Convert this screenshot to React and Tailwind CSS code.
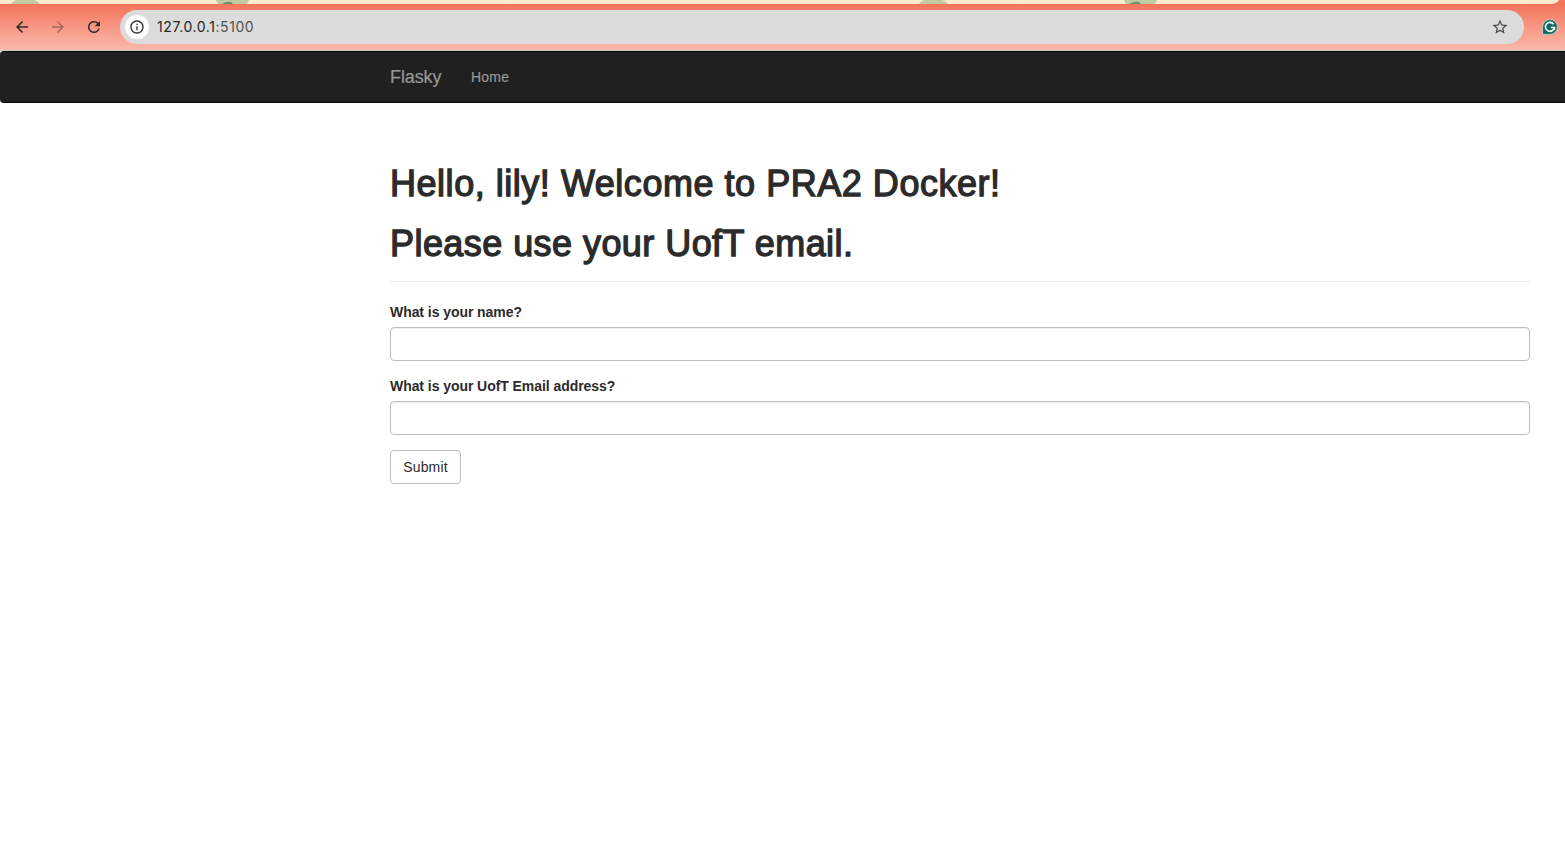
import React from "react";
import { MdArrowBack, MdArrowForward, MdRefresh, MdInfoOutline, MdStarBorder } from "react-icons/md";

function ThemeStrip() {
  return (
    <svg className="block h-1 w-full shrink-0" viewBox="0 0 1565 4">
      <rect width="1565" height="4" fill="#f3765d" />
      <path d="M0 0H1559Q1557 4 1550 4H0Z" fill="#fdebd0" />
      <g fill="#c0ca9f">
        <path d="M11 4Q14 0 18 0H34Q38 1 40 4Z" />
        <path d="M216 0H249L247 4H218Z" />
        <path d="M919 4Q922 0 926 0H942Q946 1 948 4Z" />
        <path d="M1124 0H1157L1155 4H1126Z" />
      </g>
      <g fill="#6b9270">
        <path d="M222 4Q226 1 231 2L233 4Z" />
        <path d="M1129 4Q1134 1 1139 2L1141 4Z" />
      </g>
    </svg>
  );
}

function GrammarlyIcon() {
  return (
    <svg className="block h-4 w-4" viewBox="0 0 16 16" fill="none">
      <path d="M8 .6A7.4 7.4 0 1 1 8 15.4H.6V8A7.4 7.4 0 0 1 8 .6Z" fill="#0f6b5c" stroke="#d9e5df" strokeWidth=".7" />
      <path d="M11.6 5.2A4.5 4.5 0 1 0 12.4 8.5H8.9M12.4 8.3V11" stroke="#fff" strokeWidth="1.6" />
    </svg>
  );
}

function BrowserBar() {
  return (
    <div className="flex h-[47px] shrink-0 items-start border-b border-[#c5cbc6] bg-linear-to-b from-[#f3725a] to-[#f9b9ab] pt-1.5">
      <div className="flex h-[34px] w-[120px] items-center gap-[18px] pl-[13px] text-[#2b2b2b]">
        <MdArrowBack size={18} />
        <MdArrowForward size={18} className="text-[#a8665c]" />
        <MdRefresh size={18} />
      </div>
      <div className="flex h-[34px] w-[1404px] items-center rounded-full bg-[#dcdcdc] pl-[5px] pr-[15px]">
        <div className="flex h-6 w-6 items-center justify-center rounded-full bg-white text-[#2b2b2b]">
          <MdInfoOutline size={16} />
        </div>
        <div className="ml-2 flex-1 font-['Inter',sans-serif] text-[14px] leading-5 tracking-[0.58px] text-[#252525]">
          127.0.0.1<span className="text-[#505050]">:5100</span>
        </div>
        <MdStarBorder size={18} className="text-[#484848]" />
      </div>
      <div className="ml-[18px] mt-[9px]">
        <GrammarlyIcon />
      </div>
    </div>
  );
}

function Field({ label, id }) {
  return (
    <div className="mb-[15px]">
      <label htmlFor={id} className="mb-[5px] block text-[14px] font-bold leading-5 tracking-[-0.06px]">
        {label}
      </label>
      <input
        id={id}
        className="block h-[34px] w-full rounded border border-[#bfbfbf] bg-white px-3 shadow-[inset_0_1px_1px_rgba(0,0,0,0.075)] outline-none"
      />
    </div>
  );
}

export default function App() {
  return (
    <div className="flex h-[859px] w-full flex-col overflow-hidden bg-white font-['Liberation_Sans',Arial,sans-serif] text-[14px] text-[#2b2b2b]">
      <ThemeStrip />
      <BrowserBar />
      <nav className="flex h-[52px] shrink-0 items-center rounded-l border-y border-[#080808] bg-[#202020] pl-[390px] text-[#979797] [-webkit-text-stroke:0.2px_#979797]">
        <a className="w-[81px] text-[18px] leading-5 tracking-[-0.1px]">Flasky</a>
        <a className="leading-5 tracking-[0.2px]">Home</a>
      </nav>
      <main className="ml-[390px] w-[1140px] pt-[61px]">
        <header className="mb-5 border-b border-[#e9e9e9] pb-[17px] text-[36px] leading-[40px] [-webkit-text-stroke:1.3px_#2b2b2b]">
          <h1 className="mb-5 tracking-[0.53px]">Hello, lily! Welcome to PRA2 Docker!</h1>
          <h1 className="tracking-[0.44px]">Please use your UofT email.</h1>
        </header>
        <form>
          <Field id="name" label="What is your name?" />
          <Field id="email" label="What is your UofT Email address?" />
          <button type="button" className="h-[34px] w-[71px] rounded border border-[#bfbfbf] bg-white leading-5 tracking-[0.15px]">
            Submit
          </button>
        </form>
      </main>
    </div>
  );
}
